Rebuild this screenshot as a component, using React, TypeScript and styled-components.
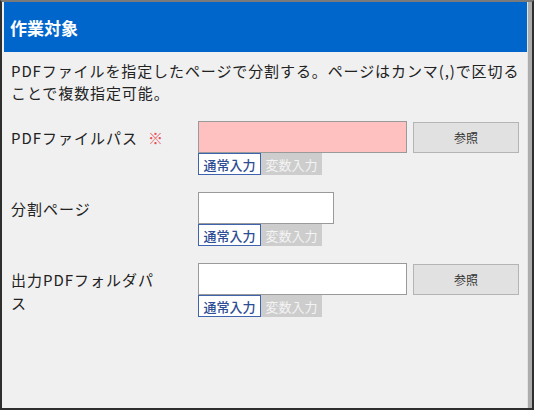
import React from 'react';
import styled, { createGlobalStyle } from 'styled-components';

const GlobalStyle = createGlobalStyle`
  html, body {
    margin: 0;
    padding: 0;
    background: #f0f0f0;
  }
  body {
    font-family: 'Noto Sans CJK JP', 'Noto Sans', sans-serif;
    color: #222;
  }
`;

export const Window = styled.div`
  box-sizing: border-box;
  width: 534px;
  height: 410px;
  display: flex;
  border: 2px solid #2e2e2e;
  border-top-color: #7a7a7a;
  padding-left: 2px;
  background: #f0f0f0;
`;

export const Main = styled.div`
  flex: 1;
  display: flex;
  flex-direction: column;
  min-width: 0;
`;

export const ScrollTrack = styled.div`
  width: 4px;
  background: #adadad;
  border-left: 1px solid #e4e4e4;
`;

export const Header = styled.div`
  height: 50px;
  display: flex;
  align-items: center;
  padding: 0 6px;
  background: #0066cc;
  color: #fff;
  font-size: 17px;
  font-weight: 700;
`;

export const Body = styled.div`
  padding: 8px 7px 0;
`;

export const Description = styled.p`
  margin: 0;
  font-size: 15px;
  line-height: 22px;
  letter-spacing: 0.9px;
`;

export const Form = styled.div`
  display: flex;
  flex-direction: column;
  gap: 17px;
  margin-top: 17px;
`;

export const Row = styled.div`
  display: grid;
  grid-template-columns: 187px 1fr;
`;

export const Label = styled.div`
  display: flex;
  align-items: flex-start;
  padding-top: 5px;
  font-size: 15px;
  line-height: 23px;
  letter-spacing: 1px;
`;

export const LabelText = styled.span`
  max-width: 150px;
`;

export const Required = styled.span`
  margin-left: 10px;
  color: #e8505b;
`;

export const Field = styled.div`
  display: flex;
  flex-direction: column;
`;

export const InputRow = styled.div`
  display: flex;
  gap: 6px;
`;

export const Input = styled.input<{ $width: number; $required?: boolean }>`
  box-sizing: border-box;
  width: ${(p) => p.$width}px;
  height: 32px;
  margin: 0;
  border: 1px solid #9a9a9a;
  background: ${(p) => (p.$required ? '#ffc0c0' : '#ffffff')};
  outline: none;
`;

export const BrowseButton = styled.button`
  box-sizing: border-box;
  width: 106px;
  height: 31px;
  margin: 1px 0 0;
  border: 1px solid #b4b4b4;
  background: #e1e1e1;
  color: #333;
  font-family: inherit;
  font-size: 12px;
  cursor: pointer;
`;

export const Tabs = styled.div`
  display: flex;
  height: 22px;
`;

export const Tab = styled.div<{ $active?: boolean }>`
  box-sizing: border-box;
  width: ${(p) => (p.$active ? 63 : 61)}px;
  height: 22px;
  display: flex;
  align-items: center;
  justify-content: center;
  font-size: 13px;
  font-weight: ${(p) => (p.$active ? 500 : 400)};
  border: ${(p) => (p.$active ? '1px solid #3f64ad' : 'none')};
  background: ${(p) => (p.$active ? '#ffffff' : '#cdcdcd')};
  color: ${(p) => (p.$active ? '#2d4d95' : '#f4f4f4')};
`;

type FieldProps = {
  label: string;
  width: number;
  required?: boolean;
  browse?: boolean;
};

const FormRow: React.FC<FieldProps> = ({ label, width, required, browse }) => (
  <Row>
    <Label>
      <LabelText>{label}</LabelText>
      {required && <Required>※</Required>}
    </Label>
    <Field>
      <InputRow>
        <Input $width={width} $required={required} />
        {browse && <BrowseButton>参照</BrowseButton>}
      </InputRow>
      <Tabs>
        <Tab $active>通常入力</Tab>
        <Tab>変数入力</Tab>
      </Tabs>
    </Field>
  </Row>
);

export default function App() {
  return (
    <>
      <GlobalStyle />
      <Window>
        <Main>
          <Header>作業対象</Header>
          <Body>
            <Description>
              PDFファイルを指定したページで分割する。ページはカンマ(,)で区切る
              <br />
              ことで複数指定可能。
            </Description>
            <Form>
              <FormRow label="PDFファイルパス" width={209} required browse />
              <FormRow label="分割ページ" width={136} />
              <FormRow label="出力PDFフォルダパス" width={209} browse />
            </Form>
          </Body>
        </Main>
        <ScrollTrack />
      </Window>
    </>
  );
}
